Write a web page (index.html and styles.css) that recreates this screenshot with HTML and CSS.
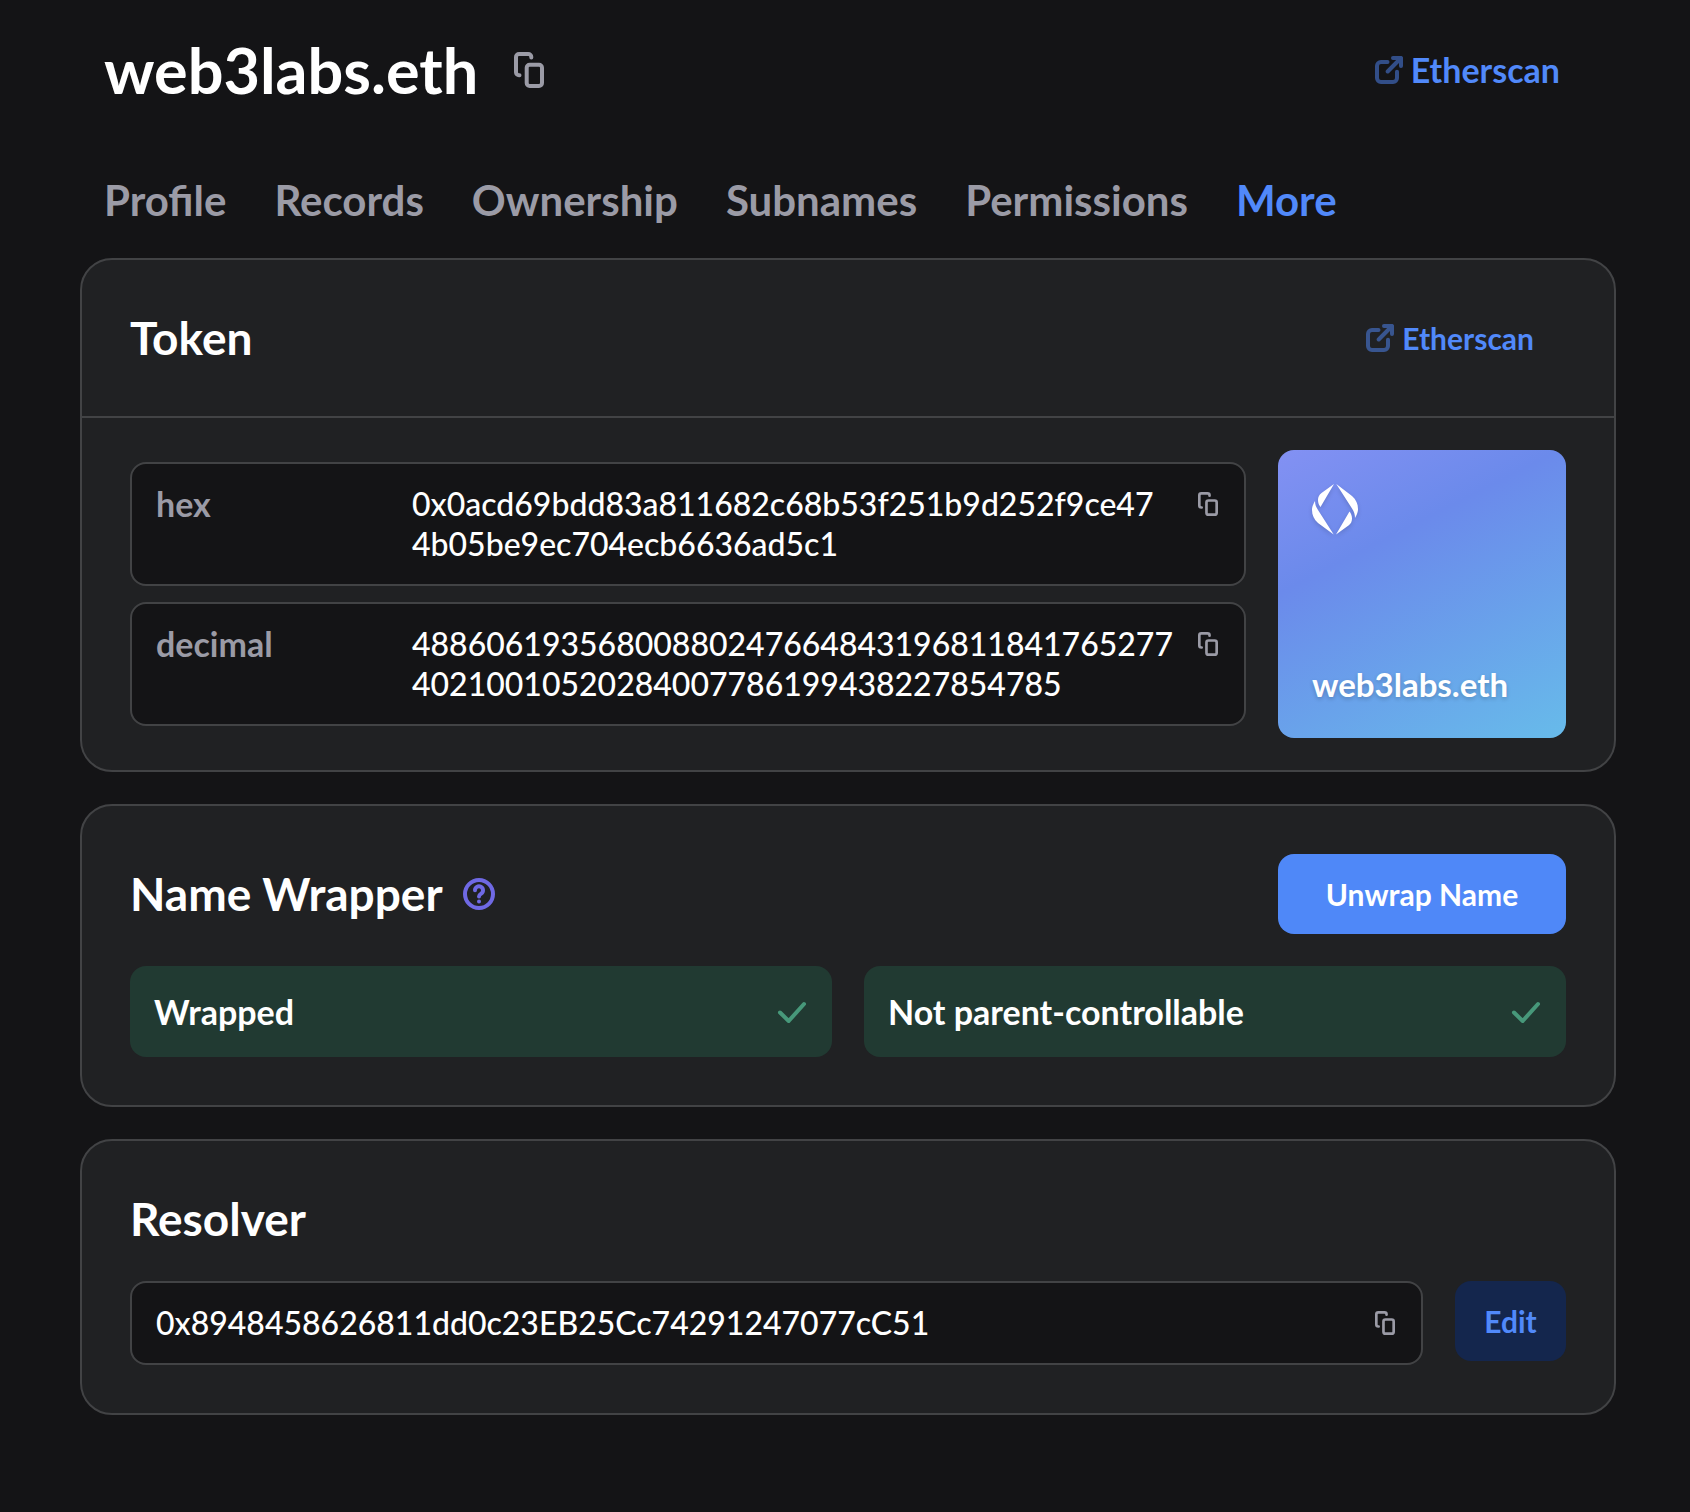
FILE: index.html
```html
<!DOCTYPE html>
<html lang="en">
<head>
<meta charset="utf-8">
<meta name="viewport" content="width=device-width, initial-scale=1">
<title>web3labs.eth</title>
<link rel="stylesheet" href="styles.css">
</head>
<body>
<svg class="defs" aria-hidden="true">
  <symbol id="copy" viewBox="0 0 30 36">
    <path d="M17.300 5.500V5a3 3 0 0 0-3-3H5a3 3 0 0 0-3 3v15.300a3 3 0 0 0 3 3h.500"/>
    <rect x="12.700" y="12.700" width="15.300" height="21.300" rx="3"/>
  </symbol>
  <symbol id="external" viewBox="0 0 28 28">
    <path d="M12.500 6H6a4 4 0 0 0-4 4v12a4 4 0 0 0 4 4h12a4 4 0 0 0 4-4v-6.200M12.700 15.500 26 2M18 2h8v8"/>
  </symbol>
  <symbol id="check" viewBox="0 0 32 32">
    <path d="M4 16.500 12.700 25 28 8"/>
  </symbol>
</svg>
<main class="page">
  <header class="page-header">
    <div class="name">
      <h1>web3labs.eth</h1>
      <button class="icon-button" type="button" aria-label="Copy name"><svg class="icon copy-large"><use href="#copy"/></svg></button>
    </div>
    <a class="external large" href="#"><svg class="icon"><use href="#external"/></svg>Etherscan</a>
  </header>

  <nav class="tabs">
    <a href="#">Profile</a>
    <a href="#">Records</a>
    <a href="#">Ownership</a>
    <a href="#">Subnames</a>
    <a href="#">Permissions</a>
    <a class="active" href="#" aria-current="page">More</a>
  </nav>

  <div class="cards">
    <section class="card">
      <div class="card-header">
        <h2>Token</h2>
        <a class="external" href="#"><svg class="icon"><use href="#external"/></svg>Etherscan</a>
      </div>
      <div class="token-body">
        <dl class="ids">
          <div class="field">
            <dt>hex</dt>
            <dd>0x0acd69bdd83a811682c68b53f251b9d252f9ce47<wbr>4b05be9ec704ecb6636ad5c1</dd>
            <dd class="action"><button class="icon-button" type="button" aria-label="Copy hex"><svg class="icon copy-small"><use href="#copy"/></svg></button></dd>
          </div>
          <div class="field">
            <dt>decimal</dt>
            <dd>48860619356800880247664843196811841765277<wbr>40210010520284007786199438227854785</dd>
            <dd class="action"><button class="icon-button" type="button" aria-label="Copy decimal"><svg class="icon copy-small"><use href="#copy"/></svg></button></dd>
          </div>
        </dl>
        <div class="nft">
          <svg class="nft-logo" viewBox="0 0 46 51" aria-hidden="true">
            <path d="M22 0 9.500 9C7 11 6 13 6 16c0 3 1 5 2.500 7zM3 17C0 22 0 25 0 26c0 5 2 9.500 6 13l15.700 11.500L6 26C4 23 3 20.500 3 17zM24 50.500 36.500 41.500C39 39.500 40 37.500 40 34.500c0-3-1-5-2.500-7zM43 34c3-5 3-8 3-9 0-5-2-9.500-6-13L24.300 0 40 24.500c2 3 3 6 3 9.500z"/>
          </svg>
          <span>web3labs.eth</span>
        </div>
      </div>
    </section>

    <section class="card padded">
      <div class="wrapper-header">
        <h2>Name Wrapper</h2>
        <button class="icon-button" type="button" aria-label="About the Name Wrapper">
          <svg class="icon help" viewBox="0 0 32 32"><circle cx="16" cy="16" r="14"/><path d="M12 12.300a4 4 0 1 1 6.200 3.300c-1.400.900-2.200 1.400-2.200 2.900M16 23.400v.1"/></svg>
        </button>
        <button class="button primary" type="button">Unwrap Name</button>
      </div>
      <ul class="states">
        <li>Wrapped<svg class="icon"><use href="#check"/></svg></li>
        <li>Not parent-controllable<svg class="icon"><use href="#check"/></svg></li>
      </ul>
    </section>

    <section class="card padded">
      <h2>Resolver</h2>
      <div class="resolver">
        <div class="field">
          <span class="address">0x8948458626811dd0c23EB25Cc74291247077cC51</span>
          <button class="icon-button" type="button" aria-label="Copy resolver"><svg class="icon copy-small"><use href="#copy"/></svg></button>
        </div>
        <button class="button secondary" type="button">Edit</button>
      </div>
    </section>
  </div>
</main>
</body>
</html>
```
FILE: styles.css
```css
:root {
  --bg: #141416;
  --surface: #202123;
  --border: #424345;
  --grey: #9b9ba6;
  --blue: #5189fa;
}

* {
  box-sizing: border-box;
}

body {
  margin: 0;
  background: var(--bg);
  color: #fff;
  font: 500 32px/40px Lato, "Liberation Sans", sans-serif;
}

h1, h2, dl, dd, ul {
  margin: 0;
  padding: 0;
}

a {
  color: var(--blue);
  text-decoration: none;
}

button {
  border: 0;
  font: inherit;
  cursor: pointer;
}

.defs {
  display: none;
}

.icon {
  display: block;
  flex: none;
  fill: none;
  stroke: currentColor;
  stroke-width: 4;
  stroke-linecap: round;
  stroke-linejoin: round;
}

.icon-button {
  display: block;
  flex: none;
  padding: 0;
  background: none;
  color: var(--grey);
}

.copy-large {
  width: 30px;
  height: 36px;
}

.copy-small {
  width: 20px;
  height: 24px;
}

.page {
  padding: 32px 74px 96px 80px;
}

.page-header {
  display: flex;
  align-items: center;
  justify-content: space-between;
  padding: 0 56px 0 24px;
}

.name {
  display: flex;
  align-items: center;
  gap: 36px;
}

h1 {
  font-size: 63px;
  line-height: 76px;
  font-weight: 700;
}

h2 {
  font-size: 46px;
  line-height: 60px;
  font-weight: 700;
}

.external {
  display: flex;
  align-items: center;
  gap: 8px;
  font-size: 30px;
  font-weight: 700;
}

.external.large {
  font-size: 34px;
}

.external .icon {
  width: 28px;
  height: 28px;
  opacity: 0.5;
}

.tabs {
  display: flex;
  flex-wrap: wrap;
  gap: 48px;
  padding: 64px 24px 30px;
  font-size: 42px;
  line-height: 56px;
  font-weight: 700;
}

.tabs a {
  color: var(--grey);
}

.tabs .active {
  color: var(--blue);
}

.cards {
  display: grid;
  gap: 32px;
}

.card {
  background: var(--surface);
  border: 2px solid var(--border);
  border-radius: 32px;
}

.padded {
  padding: 48px;
}

.card-header {
  display: flex;
  align-items: center;
  justify-content: space-between;
  padding: 48px 80px 48px 48px;
  border-bottom: 2px solid var(--border);
}

.token-body {
  display: flex;
  align-items: center;
  gap: 32px;
  padding: 32px 48px;
}

.ids {
  flex: 1;
  display: grid;
  gap: 16px;
}

.field {
  flex: 1;
  display: flex;
  align-items: flex-start;
  padding: 20px 24px;
  background: var(--bg);
  border: 2px solid var(--border);
  border-radius: 16px;
}

.field dt {
  flex: none;
  width: 256px;
  color: var(--grey);
  font-size: 34px;
  font-weight: 700;
}

.field dd {
  flex: 1;
}

.field .action {
  flex: none;
}

.field .icon-button {
  padding: 8px 2px;
}

.address {
  flex: 1;
}

.nft {
  flex: none;
  display: flex;
  flex-direction: column;
  justify-content: space-between;
  width: 288px;
  height: 288px;
  padding: 34px;
  border-radius: 16px;
  background: linear-gradient(153deg, #8391f3, #6b8aeb 33%, #67bbea);
  font-size: 33px;
  font-weight: 700;
  text-shadow: 0 2px 4px rgba(0, 0, 0, 0.2);
}

.nft-logo {
  width: 46px;
  height: 51px;
  fill: #fff;
  filter: drop-shadow(0 2px 2px rgba(0, 0, 0, 0.15));
}

.wrapper-header {
  display: flex;
  align-items: center;
  gap: 20px;
  margin-bottom: 32px;
}

.help {
  width: 32px;
  height: 32px;
  color: #6f69e4;
}

.button {
  height: 80px;
  border-radius: 16px;
  font-size: 30px;
  font-weight: 700;
}

.primary {
  width: 288px;
  margin-left: auto;
  background: #4f88f8;
  color: #fff;
}

.secondary {
  width: 111px;
  background: #14264d;
  color: var(--blue);
}

.states {
  display: grid;
  grid-template-columns: 1fr 1fr;
  gap: 32px;
  list-style: none;
}

.states li {
  display: flex;
  align-items: center;
  justify-content: space-between;
  min-height: 91px;
  padding: 0 24px;
  border-radius: 16px;
  background: #213a32;
  font-size: 34px;
  font-weight: 700;
}

.states .icon {
  width: 32px;
  height: 32px;
  color: #47987a;
}

.resolver {
  display: flex;
  align-items: flex-start;
  gap: 32px;
  margin-top: 32px;
}
```
